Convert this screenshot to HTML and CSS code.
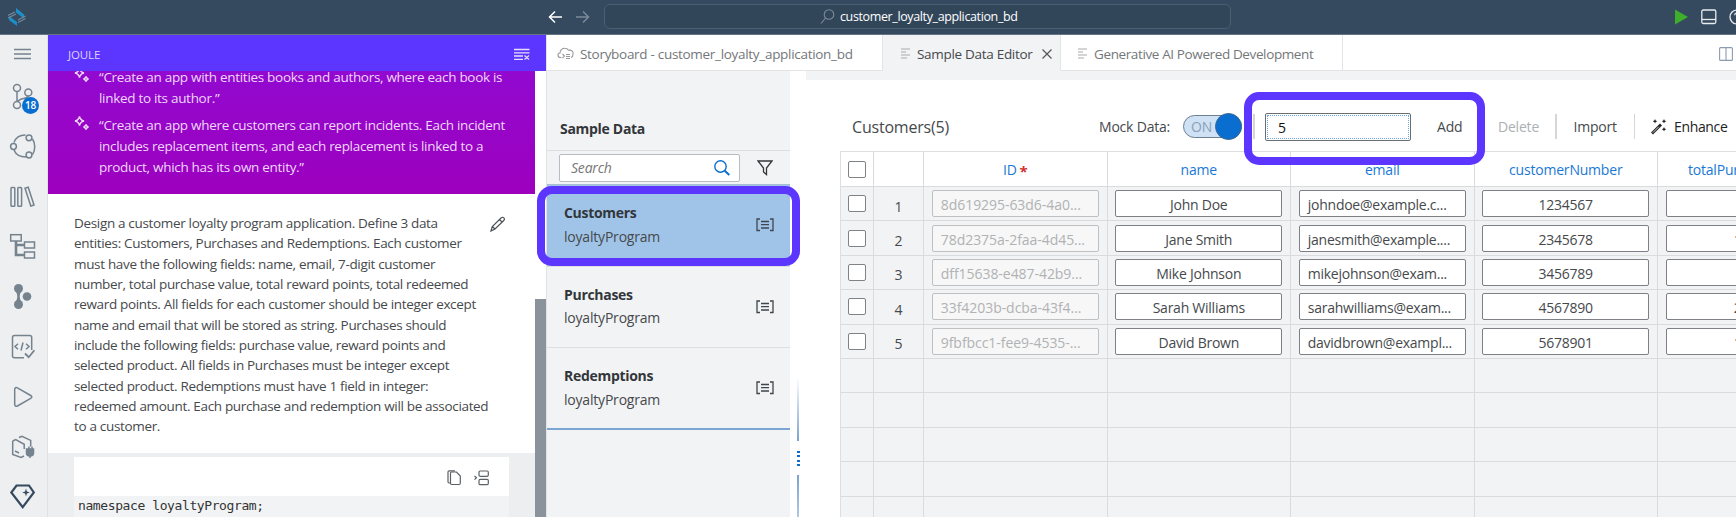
FILE: index.html
```html
<!DOCTYPE html>
<html lang="en">
<head>
<meta charset="utf-8">
<title>customer_loyalty_application_bd</title>
<link rel="stylesheet" href="styles.css">
</head>
<body>
<div class="app">
  <header class="topbar">
    <svg class="logo" width="18" height="18" viewBox="0 0 18 18"><path d="M8 0l8 6.500v4l-8-6z" fill="#1b90c8"/><path d="M9 18l-8-6v-4l8 6z" fill="#1b90c8"/><path d="M0 7.500l7-3.500M0 10l8-4M10 12l7.500-4M10 14.500l7.500-4" stroke="#71879b" stroke-width="1.300"/></svg>
    <svg class="nav" width="44" height="16" viewBox="0 0 44 16" fill="none" stroke-width="1.500"><path d="M14 8H2M7 2.500L1.500 8 7 13.500" stroke="#fff"/><path d="M28 8h12M35 2.500L40.500 8 35 13.500" stroke="#7c8a98"/></svg>
    <div class="command">
      <svg width="15" height="16" viewBox="0 0 15 16" fill="none" stroke="#7d8b98" stroke-width="1.100"><circle cx="9" cy="5.500" r="4.800"/><path d="M5.500 9L1 14.500"/></svg>
      <span>customer_loyalty_application_bd</span>
    </div>
    <div class="top-actions">
      <svg width="13" height="16" viewBox="0 0 13 16"><path d="M0 .5L13 8 0 15.500z" fill="#3fae2a"/></svg>
      <svg width="16" height="16" viewBox="0 0 16 16" fill="none" stroke="#e8ecef" stroke-width="1.300"><rect x=".8" y="1" width="14" height="13.500" rx="1.500"/><path d="M1 10.500h14"/></svg>
      <svg width="16" height="16" viewBox="0 0 16 16" fill="none" stroke="#e8ecef" stroke-width="1.300"><circle cx="8" cy="8" r="7"/><path d="M5.700 6.200a2.300 2.300 0 1 1 3.400 2c-.9.500-1.100.8-1.100 1.600M8 11v1.300"/></svg>
    </div>
  </header>
  <div class="main">
    <nav class="rail">
      <svg class="menu" width="46" height="36" viewBox="0 0 46 36"><path d="M14 14.500h17M14 19h17M14 23.500h17" stroke="#75838f" stroke-width="1.300"/></svg>
      <div class="rail-item">
        <svg width="46" height="50" viewBox="0 0 46 50" class="line"><circle cx="17" cy="16" r="3.500"/><circle cx="28.300" cy="20.500" r="3.500"/><circle cx="17" cy="33" r="3.500"/><path d="M17 19.500v10M28 24c-1 4-8 1-10.500 6"/></svg>
        <span class="badge">18</span>
      </div>
      <svg width="46" height="50" viewBox="0 0 46 50" class="line"><path d="M14 20.500c1.500-4.500 6-7.500 11.500-7.500M32.500 17c3 4.500 3 11 0 15.500M26 35c-6 0-10-2-12-7"/><circle cx="13.500" cy="24.500" r="2.900"/><circle cx="29" cy="15.800" r="2.900"/><circle cx="29" cy="33" r="2.900"/></svg>
      <svg width="46" height="50" viewBox="0 0 46 50" class="line"><rect x="11" y="15.500" width="3.800" height="18.800" rx=".8"/><rect x="17.800" y="15.500" width="3.800" height="18.800" rx=".8"/><path d="M25 16.300l3.200-1 5.800 17.700-3.200 1z"/></svg>
      <svg width="46" height="50" viewBox="0 0 46 50" class="line"><rect x="10.700" y="12.700" width="10.500" height="6.300"/><rect x="24.500" y="20" width="10" height="6"/><rect x="24.500" y="30" width="10" height="6"/><path d="M16 19v14h8M16 23h8" stroke-width="2.600"/></svg>
      <svg width="46" height="50" viewBox="0 0 46 50" class="solid"><circle cx="18.500" cy="16.500" r="4.500"/><circle cx="27" cy="24.500" r="4.300"/><circle cx="18.500" cy="32.500" r="4.500"/><path d="M15 18c3 4 3 9 0 13h7c-3-4-3-9 0-13z"/></svg>
      <svg width="46" height="50" viewBox="0 0 46 50" class="line"><path d="M24 35.800H14.500a2 2 0 0 1-2-2V15.500a2 2 0 0 1 2-2h15.200a2 2 0 0 1 2 2V28M18 21.800l-3 2.700 3 2.700M26 21.800l3 2.700-3 2.700M23 20.500l-2 8"/><path d="M25 31.500l3.700 3.700 5.700-7" stroke-width="1.800"/></svg>
      <svg width="46" height="50" viewBox="0 0 46 50" class="line"><path d="M14.700 17.500c0-1.800 1.200-2.500 2.700-1.700l13.300 7.700c1.500.9 1.500 2 0 2.800L17.400 34c-1.500.8-2.700.1-2.700-1.700z"/></svg>
      <svg width="46" height="50" viewBox="0 0 46 50" class="line"><path d="M12.700 19l3-1.500 8.500 4.800V27M12.700 19v13.500l8.300 3 3-1.500M19 15.500l3-1.300 8.700 4.200v6M15 29l4 2"/><path d="M26.500 27h7v4c0 2-1.500 3-3.500 3s-3.500-1-3.500-3zM29 24.500V27M32 24.500V27M30 34v2" fill="#75838f"/></svg>
      <svg width="46" height="50" viewBox="0 0 46 50"><path d="M16.500 13.500h12.500l4.800 7L22.700 35.200 11.300 20.500z" fill="none" stroke="#354a5f" stroke-width="2.200"/><path d="M26 16.500l.9 3 2.900 1-2.900 1-.9 3-.9-3-2.900-1 2.900-1z" fill="#354a5f"/></svg>
    </nav>

    <section class="joule">
      <div class="joule-head"><span>JOULE</span>
        <svg width="16" height="13" viewBox="0 0 16 13" stroke="#e5dfff" stroke-width="1.300"><path d="M0 1.500h15.500M0 4.800h15.500M0 8h9M0 11.300h9M10.500 7.500l4.500 4M15 7.500l-4.500 4"/></svg>
      </div>
      <div class="joule-body">
        <div class="chat">
          <div class="prompts">
            <div class="prompt"><svg width="16" height="17" viewBox="0 0 16 17" fill="none" stroke="#eed7fa" stroke-width="1.400"><path d="M5.500 1.500q.8 3.700 4.500 4.500-3.700.8-4.500 4.500Q4.700 6.800 1 6q3.700-.8 4.500-4.500zM12 9.500q.5 2 2.500 2.500-2 .5-2.500 2.500-.5-2-2.500-2.500 2-.5 2.500-2.500z"/></svg><p>“Create an app with entities books and authors, where each book is<br>linked to its author.”</p></div>
            <div class="prompt"><svg width="16" height="17" viewBox="0 0 16 17" fill="none" stroke="#eed7fa" stroke-width="1.400"><path d="M5.500 1.500q.8 3.700 4.500 4.500-3.700.8-4.500 4.500Q4.700 6.800 1 6q3.700-.8 4.500-4.500zM12 9.500q.5 2 2.500 2.500-2 .5-2.500 2.500-.5-2-2.500-2.500 2-.5 2.500-2.500z"/></svg><p>“Create an app where customers can report incidents. Each incident<br>includes replacement items, and each replacement is linked to a<br>product, which has its own entity.”</p></div>
          </div>
          <div class="message">
            <p>Design a customer loyalty program application. Define 3 data<br>entities: Customers, Purchases and Redemptions. Each customer<br>must have the following fields: name, email, 7-digit customer<br>number, total purchase value, total reward points, total redeemed<br>reward points. All fields for each customer should be integer except<br>name and email that will be stored as string. Purchases should<br>include the following fields: purchase value, reward points and<br>selected product. All fields in Purchases must be integer except<br>selected product. Redemptions must have 1 field in integer:<br>redeemed amount. Each purchase and redemption will be associated<br>to a customer.</p>
            <svg width="16" height="16" viewBox="0 0 16 16" fill="none" stroke="#4a5055" stroke-width="1.200"><path d="M1 15l1.300-4.500L11 2q2-1.500 3 0 1 1.500-.5 2.800L5 13zM9.500 3.500l2.800 2.800M2.300 10.500L5 13"/></svg>
          </div>
          <div class="answer">
            <div class="code">
              <div class="code-tools">
                <svg width="15" height="16" viewBox="0 0 15 16" fill="none" stroke="#5c6166" stroke-width="1.200"><path d="M3.500 13H2.200Q1 13 1 11.800V2Q1 .8 2.200.8H8"/><path d="M4.500 2h5l3.800 4v7.300q0 1.200-1.200 1.200H4.700q-1.200 0-1.200-1.200V3.200Q3.500 2 4.500 2z"/></svg>
                <svg width="15" height="16" viewBox="0 0 15 16" fill="none" stroke="#5c6166" stroke-width="1.200"><rect x="5" y="1" width="9.300" height="5.300" rx="1.200"/><rect x="5" y="9.300" width="9.300" height="5.300" rx="1.200"/><path d="M.5 6l2 1.800-2 1.800"/></svg>
              </div>
              <pre>namespace loyaltyProgram;</pre>
            </div>
          </div>
        </div>
        <div class="scroll"><div class="thumb"></div></div>
      </div>
    </section>

    <section class="work">
      <div class="tabs">
        <div class="tab tab-story"><svg width="17" height="13" viewBox="0 0 17 13" fill="none" stroke="#999" stroke-width="1.100"><path d="M4.500 10.500H3.500C.5 10.500 0 6.500 3 6 3 3 5.500 1 8 1.200c1.500 0 2.700.8 3.500 2 3-.5 5 1 4.500 4 0 2-1 3-2 3.300M5.500 7l2 2-2 2M9 7.500h4M9 9.500h4M9 11.500h4"/></svg><span>Storyboard - customer_loyalty_application_bd</span></div>
        <div class="tab tab-active"><svg width="10" height="11" viewBox="0 0 10 11" stroke="#aaa"><path d="M0 1h9M0 4h5M0 7h9M0 10h6"/></svg><span>Sample Data Editor</span><svg class="close" width="10" height="10" viewBox="0 0 10 10" stroke="#555" stroke-width="1.200"><path d="M.5.5l9 9M9.500.5l-9 9"/></svg></div>
        <div class="tab tab-gen"><svg width="10" height="11" viewBox="0 0 10 11" stroke="#aaa"><path d="M0 1h9M0 4h5M0 7h9M0 10h6"/></svg><span>Generative AI Powered Development</span></div>
        <div class="tab-rest"><svg width="14" height="14" viewBox="0 0 14 14" fill="none" stroke="#8b9bb0" stroke-width="1.100"><rect x=".6" y=".6" width="12.800" height="12.800" rx="1"/><path d="M7 .6v12.800"/></svg></div>
      </div>
      <div class="panes">
        <aside class="list">
          <h2>Sample Data</h2>
          <div class="list-tools">
            <div class="search"><span>Search</span><svg width="16" height="16" viewBox="0 0 16 16" fill="none" stroke="#0a6ed1" stroke-width="1.400"><circle cx="6.500" cy="6.500" r="5.700"/><path d="M10.500 10.500l4.800 4.500" stroke-width="2"/></svg></div>
            <svg width="16" height="16" viewBox="0 0 16 16" fill="none" stroke="#32363a" stroke-width="1.300"><path d="M1 1h14L9.500 8v6.500L6.500 12V8z"/></svg>
          </div>
          <div class="entity selected"><div><b>Customers</b><span>loyaltyProgram</span></div><svg width="18" height="14" viewBox="0 0 18 14" fill="none" stroke="#3f464d" stroke-width="1.300"><path d="M4 1H1v11.500h3M14 1h3v11.500h-3M5 3.500h8M5 6.700h8M5 10h8"/></svg></div>
          <div class="entity"><div><b>Purchases</b><span>loyaltyProgram</span></div><svg width="18" height="14" viewBox="0 0 18 14" fill="none" stroke="#3f464d" stroke-width="1.300"><path d="M4 1H1v11.500h3M14 1h3v11.500h-3M5 3.500h8M5 6.700h8M5 10h8"/></svg></div>
          <div class="entity last"><div><b>Redemptions</b><span>loyaltyProgram</span></div><svg width="18" height="14" viewBox="0 0 18 14" fill="none" stroke="#3f464d" stroke-width="1.300"><path d="M4 1H1v11.500h3M14 1h3v11.500h-3M5 3.500h8M5 6.700h8M5 10h8"/></svg></div>
        </aside>
        <div class="splitter"><i class="bar up"></i><i class="dots"></i><i class="bar down"></i></div>
        <div class="editor">
          <div class="toolbar">
            <span class="title">Customers(5)</span>
            <span class="mock">Mock Data:</span>
            <span class="switch"><span>ON</span><i></i></span>
            <span class="sep sep-a"></span>
            <span class="count">5</span>
            <span class="btn add">Add</span>
            <span class="btn delete">Delete</span>
            <span class="sep sep-b"></span>
            <span class="btn import">Import</span>
            <span class="sep sep-c"></span>
            <svg class="wand" width="16" height="16" viewBox="0 0 16 16"><path d="M1 14.500l9-9" stroke="#222" stroke-width="2.800"/><path d="M1.800 13.700l6-6" stroke="#fff" stroke-width=".8"/><path d="M4 0l.7 1.600 1.600.7-1.600.7L4 4.600 3.300 3l-1.600-.7 1.600-.7zM13 0l.7 1.600 1.600.7-1.600.7-.7 1.600-.7-1.600-1.600-.7 1.600-.7zM13 8l.7 1.600 1.600.7-1.600.7-.7 1.600-.7-1.600-1.600-.7 1.600-.7z" fill="#222"/></svg>
            <span class="btn enhance">Enhance</span>
          </div>
          <div class="grid">
            <div class="row head"><div><i class="check"></i></div><div></div><div>ID<em>*</em></div><div>name</div><div>email</div><div>customerNumber</div><div>totalPurchaseValue</div></div>
            <div class="row"><div><i class="check"></i></div><div class="num">1</div><div><span class="field id">8d619295-63d6-4a0...</span></div><div><span class="field">John Doe</span></div><div><span class="field mail">johndoe@example.c...</span></div><div><span class="field">1234567</span></div><div><span class="field">500</span></div></div>
            <div class="row"><div><i class="check"></i></div><div class="num">2</div><div><span class="field id">78d2375a-2faa-4d45...</span></div><div><span class="field">Jane Smith</span></div><div><span class="field mail">janesmith@example....</span></div><div><span class="field">2345678</span></div><div><span class="field">1000</span></div></div>
            <div class="row"><div><i class="check"></i></div><div class="num">3</div><div><span class="field id">dff15638-e487-42b9...</span></div><div><span class="field">Mike Johnson</span></div><div><span class="field mail">mikejohnson@exam...</span></div><div><span class="field">3456789</span></div><div><span class="field">750</span></div></div>
            <div class="row"><div><i class="check"></i></div><div class="num">4</div><div><span class="field id">33f4203b-dcba-43f4...</span></div><div><span class="field">Sarah Williams</span></div><div><span class="field mail">sarahwilliams@exam...</span></div><div><span class="field">4567890</span></div><div><span class="field">2000</span></div></div>
            <div class="row"><div><i class="check"></i></div><div class="num">5</div><div><span class="field id">9fbfbcc1-fee9-4535-...</span></div><div><span class="field">David Brown</span></div><div><span class="field mail">davidbrown@exampl...</span></div><div><span class="field">5678901</span></div><div><span class="field">1500</span></div></div>
            <div class="row"><div></div><div></div><div></div><div></div><div></div><div></div><div></div></div>
            <div class="row"><div></div><div></div><div></div><div></div><div></div><div></div><div></div></div>
            <div class="row"><div></div><div></div><div></div><div></div><div></div><div></div><div></div></div>
            <div class="row"><div></div><div></div><div></div><div></div><div></div><div></div><div></div></div>
            <div class="row"><div></div><div></div><div></div><div></div><div></div><div></div><div></div></div>
          </div>
        </div>
      </div>
    </section>
  </div>
  <div class="callout callout-entity"></div>
  <div class="callout callout-add"></div>
</div>
</body>
</html>
```
FILE: styles.css
```css
* { box-sizing: border-box; }
body { margin: 0; font-family: "Open Sans", "Noto Sans", sans-serif; font-size: 13.5px; color: #46494c; letter-spacing: -0.2px; }
svg { display: block; flex: none; }
p, h2, pre { margin: 0; }
.app { position: relative; width: 1736px; height: 517px; overflow: hidden; display: flex; flex-direction: column; background: #fff; white-space: nowrap; }

.topbar { height: 35px; flex: none; background: #354a5f; border-bottom: 1px solid #667583; display: flex; align-items: center; }
.logo { margin-left: 8px; }
.nav { margin-left: 522px; }
.command { margin-left: 12px; width: 627px; flex: none; height: 25px; margin-top: -1px; border: 1px solid #4b5f72; border-radius: 6px; background: #32465a; color: #fff; font-size: 12.5px; letter-spacing: -0.37px; display: flex; align-items: center; padding-left: 215px; }
.command span { margin-left: 5px; }
.top-actions { margin-left: 444px; flex: none; display: flex; align-items: center; gap: 12.500px; margin-top: -1px; }

.main { flex: 1; display: flex; min-height: 0; }
.rail { width: 48px; flex: none; background: #edeff0; border-right: 1px solid #dfe1e3; display: flex; flex-direction: column; }
.rail .menu { margin-bottom: 1px; }
.rail-item { position: relative; height: 50px; }
.line { fill: none; stroke: #75838f; stroke-width: 1.5; }
.solid { fill: #75838f; }
.badge { position: absolute; left: 22px; top: 25px; width: 17px; height: 17px; border-radius: 50%; background: #0a6ed1; color: #fff; font-size: 10px; font-weight: 600; line-height: 17px; text-align: center; }

.joule { width: 498px; flex: none; display: flex; flex-direction: column; }
.joule-head { height: 36px; flex: none; width: 499px; background: #5c35ff; color: #ddd3ff; font-size: 11.5px; letter-spacing: -0.1px; padding: 2px 17px 0 20px; display: flex; align-items: center; justify-content: space-between; }
.joule-body { flex: 1; display: flex; min-height: 0; }
.chat { width: 487px; flex: none; display: flex; flex-direction: column; overflow: hidden; letter-spacing: -0.33px; }
.prompts { height: 123px; flex: none; background: linear-gradient(#9209d0, #9d00bd); color: #eed7fa; overflow: hidden; display: flex; flex-direction: column; gap: 6px; letter-spacing: -0.3px; }
.prompt { display: flex; padding-left: 26px; line-height: 21px; gap: 9px; }
.prompt:first-child { margin-top: -4px; }
.message { height: 259px; flex: none; padding: 19px 27px 0 26px; display: flex; justify-content: space-between; line-height: 20.350px; }
.message svg { margin: 3px 2px 0 0; }
.answer { flex: 1; background: #edeef0; padding: 4px 26px 0; }
.code { background: #f2f3f5; height: 70px; }
.code-tools { height: 39px; background: #fff; display: flex; align-items: center; justify-content: flex-end; gap: 12px; padding: 2px 20px 0 0; }
.code pre { font: 13px "DejaVu Sans Mono", monospace; letter-spacing: -0.400px; color: #333; padding: 2px 4px; }
.scroll { width: 11px; padding-top: 228px; }
.thumb { height: 220px; background: #8a929b; }

.work { flex: 1; min-width: 0; border-left: 1px solid #e0e2e4; display: flex; flex-direction: column; }
.tabs { height: 36px; flex: none; display: flex; }
.tab, .tab-rest { border-bottom: 1px solid #e2e4e6; border-right: 1px solid #e2e4e6; display: flex; align-items: center; color: #74777a; padding-top: 2px; }
.tab-story { width: 336px; padding-left: 10px; gap: 6px; letter-spacing: -0.3px; }
.tab-active { width: 178px; padding-left: 18px; gap: 6px; background: #f2f3f5; border-bottom-color: #f2f3f5; color: #46494c; letter-spacing: -0.3px; }
.close { margin-left: 3px; }
.tab-gen { width: 282px; padding-left: 17px; gap: 6px; letter-spacing: -0.38px; }
.tab-rest { flex: 1; border-right: 0; justify-content: flex-end; padding-right: 3px; }
.panes { flex: 1; display: flex; min-height: 0; }
.list { width: 243px; flex: none; background: #f2f3f5; font-size: 14px; }
.list h2 { height: 80px; padding: 46px 0 0 13px; font-size: 14px; line-height: 24px; font-weight: 700; color: #32363a; border-bottom: 1px solid #dcdee0; letter-spacing: -0.3px; }
.list-tools { height: 34px; display: flex; align-items: center; padding-left: 12px; gap: 17px; border-bottom: 1px solid #a8bfd3; }
.search { width: 181px; height: 28px; border: 1px solid #b8bdc4; border-radius: 2px; background: #fff; display: flex; align-items: center; justify-content: space-between; padding: 0 9px 0 11px; color: #777; font-style: italic; }
.entity { height: 81.500px; border-bottom: 1px solid #dcdee0; padding: 16px 16px 0 17px; display: flex; justify-content: space-between; }
.entity b, .entity span { display: block; line-height: 23.5px; }
.entity b { letter-spacing: -0.3px; color: #32363a; }
.entity svg { margin-top: 17px; }
.selected { background: #a0c4e8; }
.last { border-bottom: 2px solid #7ba6d3; }
.splitter { width: 16px; padding-left: 7px; flex: none; display: flex; flex-direction: column; background: #fff; }
.splitter i { display: block; width: 2px; }
.up { height: 64px; margin-top: 306px; background: linear-gradient(#fff, #7ba3d0); }
.splitter .dots { width: 3px; height: 16px; margin: 10px 0 8px; background: repeating-linear-gradient(#0a6ed1 0 2px, transparent 2px 4.300px); }
.down { flex: 1; background: linear-gradient(#7ba3d0, #b0c9e4); }

.editor { flex: 1; min-width: 0; border-top: 9px solid #f2f3f5; padding-left: 34px; }
.toolbar { height: 71px; display: flex; align-items: center; padding-top: 22px; padding-left: 12px; font-size: 14px; }
.title { font-size: 16px; letter-spacing: -0.2px; width: 247px; }
.mock { width: 84px; }
.switch { width: 59px; height: 23px; border: 1px solid #6d7f91; border-radius: 12px; background: #cfe2f5; position: relative; flex: none; color: #8ba0b5; line-height: 22px; padding-left: 7px; }
.switch i { position: absolute; right: -1px; top: -3px; width: 27px; height: 27px; border-radius: 50%; background: #0a6ed1; border: 1px solid #3d6690; }
.sep { width: 1.500px; height: 25px; background: #d4d6d8; flex: none; }
.sep-a { margin-left: 11px; width: 2px; }
.count { width: 146px; height: 28px; margin-left: 10px; border: 1px solid #6a6d70; outline: 1px dotted #6aa7e4; outline-offset: -3px; border-radius: 2px; color: #111; line-height: 28px; padding-left: 12px; flex: none; }
.btn { flex: none; color: #46494c; }
.add { margin-left: 26px; width: 61px; }
.delete { width: 57px; color: #adb0b3; }
.import { margin-left: 17px; width: 60px; }
.wand { margin-left: 16px; }
.enhance { margin-left: 7px; color: #222; letter-spacing: -0.35px; }

.grid { width: 1001px; border-left: 1px solid #dcdee0; border-top: 1px solid #dcdee0; background: #f2f3f5; font-size: 14px; letter-spacing: -0.25px; }
.row { display: grid; grid-template-columns: 33px 50px 183.500px 183.500px 183.500px 183.500px 183.500px; height: 34.400px; }
.row > div { border-right: 1px solid #d9dbdd; border-bottom: 1px solid #d9dbdd; display: flex; align-items: center; justify-content: center; }
.row.head { height: 35px; background: #fff; color: #1a78d4; letter-spacing: -0.2px; }
.head div { padding-top: 1px; }
.head em { color: #d23030; font-style: normal; font-weight: 700; margin-left: 3px; font-size: 15px; height: 18px; }
.check { width: 18px; height: 17px; border: 1px solid #808386; border-radius: 2px; background: #fff; }
.num { padding-top: 5px; }
.field { width: 167px; height: 27px; border: 1px solid #7d8084; border-radius: 2px; background: #fff; text-align: center; line-height: 27px; overflow: hidden; }
.field.id { background: #f7f7f7; border-color: #bec0c2; color: #b0b2b4; text-align: left; padding-left: 8px; letter-spacing: -0.05px; }
.field.mail { text-align: left; padding-left: 8px; }

.callout { position: absolute; border: 8px solid #5c35ff; border-radius: 15px; }
.callout-entity { left: 537px; top: 186px; width: 263px; height: 80px; }
.callout-add { left: 1244px; top: 92px; width: 241px; height: 73px; }
```
